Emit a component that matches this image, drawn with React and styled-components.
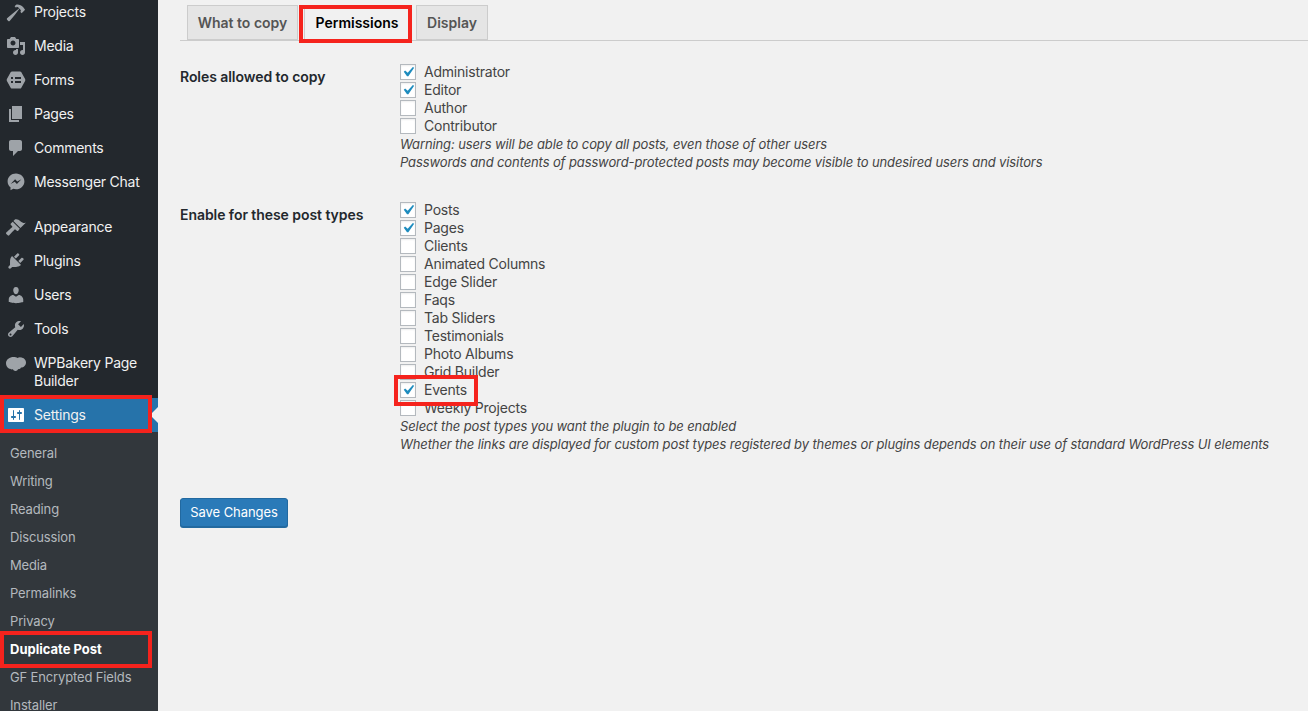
import React from "react";
import styled, { createGlobalStyle } from "styled-components";

const Global = createGlobalStyle`
  html, body { margin: 0; padding: 0; height: 100%; overflow: hidden; background: #f1f1f1; }
  body { font-family: Inter, "Liberation Sans", sans-serif; font-size: 14px; color: #444; }
`;

const Page = styled.div`
  display: flex;
  width: 1308px;
  height: 711px;
  overflow: hidden;
`;

const Sidebar = styled.nav`
  flex: 0 0 158px;
  background: #23282d;
  height: 711px;
  overflow: hidden;
`;

const Menu = styled.ul`
  list-style: none;
  margin: -5px 0 0;
  padding: 0;
`;

const MenuItem = styled.li`
  position: relative;
  display: flex;
  align-items: ${(p) => (p.$tall ? "flex-start" : "center")};
  min-height: 34px;
  padding: ${(p) => (p.$tall ? "8px 8px 8px 0" : "0 8px 0 0")};
  box-sizing: border-box;
  margin-bottom: ${(p) => (p.$sep ? "11px" : "0")};
  color: #f1f1f1;
  font-size: 14px;
  line-height: 18px;
  letter-spacing: -0.24px;
  background: ${(p) => (p.$active ? "#2673aa" : "transparent")};
  ${(p) =>
    p.$active &&
    `&::after {
      content: "";
      position: absolute;
      right: 0;
      top: 50%;
      margin-top: -8px;
      border: 8px solid transparent;
      border-right-color: #f1f1f1;
    }`}
`;

const IconSlot = styled.span`
  flex: 0 0 34px;
  display: flex;
  justify-content: center;
  align-items: center;
  color: ${(p) => (p.$active ? "#fff" : "#9ea3a8")};
  svg { display: block; margin-left: -2px; }
`;

const SubMenu = styled.ul`
  list-style: none;
  margin: 0;
  padding: 7px 0 0;
  background: #32373c;
`;

const SubItem = styled.li`
  position: relative;
  height: 28px;
  line-height: 28px;
  padding-left: 10px;
  font-size: 13px;
  letter-spacing: ${(p) => (p.$current ? "0" : "-0.14px")};
  font-weight: ${(p) => (p.$current ? 700 : 400)};
  color: ${(p) => (p.$current ? "#fff" : "#b4b9be")};
`;

const Mark = styled.span`
  position: absolute;
  box-sizing: border-box;
  border: 4px solid #f5231d;
  pointer-events: none;
  z-index: 2;
  left: ${(p) => p.$l}px;
  top: ${(p) => p.$t}px;
  right: ${(p) => p.$r}px;
  bottom: ${(p) => p.$b}px;
`;

const Main = styled.main`
  flex: 1;
  padding: 5px 0 0 22px;
  min-width: 0;
`;

const Tabs = styled.div`
  display: flex;
  gap: 6px;
  height: 35px;
  padding-left: 7px;
  border-bottom: 1px solid #ccc;
`;

const Tab = styled.a`
  position: relative;
  box-sizing: border-box;
  width: ${(p) => p.$w}px;
  height: ${(p) => (p.$active ? 36 : 35)}px;
  text-align: center;
  line-height: 34px;
  font-size: 14px;
  font-weight: 600;
  border: 1px solid #ccc;
  border-bottom: ${(p) => (p.$active ? "0" : "1px solid #ccc")};
  background: ${(p) => (p.$active ? "#f1f1f1" : "#e5e5e5")};
  color: ${(p) => (p.$active ? "#000" : "#555")};
`;

const Section = styled.section`
  display: flex;
  margin-top: ${(p) => p.$top}px;
`;

const Heading = styled.h3`
  flex: 0 0 220px;
  margin: 0;
  padding-top: 5px;
  font-size: 14px;
  line-height: 18px;
  font-weight: 600;
  letter-spacing: -0.06px;
  color: #23282d;
`;

const Options = styled.div`
  display: flex;
  flex-direction: column;
  align-items: flex-start;
`;

const Row = styled.label`
  position: relative;
  display: flex;
  align-items: center;
  gap: 8px;
  height: 18px;
  font-size: 14px;
  line-height: 18px;
  letter-spacing: -0.22px;
  color: #444;
`;

const Box = styled.span`
  flex: 0 0 16px;
  box-sizing: border-box;
  width: 16px;
  height: 16px;
  position: relative;
  border: 1px solid #b4b9be;
  background: #fff;
  box-shadow: inset 0 1px 2px rgba(0, 0, 0, 0.07);
  svg { position: absolute; left: -3px; top: -3px; color: #1e8cbe; }
`;

const Note = styled.div`
  font-size: 13px;
  line-height: 18px;
  font-style: italic;
  letter-spacing: -0.11px;
  color: #444;
`;

const SaveButton = styled.button`
  display: block;
  box-sizing: border-box;
  width: 108px;
  height: 29px;
  margin-top: 45px;
  padding: 0;
  border: 1px solid #2269a0;
  border-radius: 3px;
  background: #2a7ab8;
  box-shadow: 0 1px 0 #236a9f;
  color: #fff;
  font-family: inherit;
  font-size: 13px;
  letter-spacing: -0.08px;
  line-height: 27px;
`;

const Icon = ({ d, size = 20, rule }) => (
  <svg width={size} height={size} viewBox="0 0 20 20" fill="currentColor">
    <path d={d} fillRule={rule} />
  </svg>
);

const icons = {
  hammer:
    "M17.7 6.32l1.41 1.42-3.47 3.41-1.42-1.42.84-.82c-.32-.76-.81-1.57-1.51-2.31l-4.61 6.05-5.26 6.23c-.39.39-1.02.39-1.42 0l-1.2-1.21c-.39-.39-.39-1.02 0-1.41l6.29-5.22 5.92-4.68c-.8-.71-1.72-1.22-2.46-1.5l-.79.79-1.41-1.42 1.5-1.5c2.5-.5 5.3.6 7.1 2.4.7.7 1.1 1.2 1.6 1.9z",
  media:
    "M13 11V4c0-.55-.45-1-1-1h-1.67L9 1H5L3.67 3H2c-.55 0-1 .45-1 1v7c0 .55.45 1 1 1h10c.55 0 1-.45 1-1zM7 4.5c1.38 0 2.5 1.12 2.5 2.5S8.38 9.5 7 9.5 4.5 8.38 4.5 7 5.62 4.5 7 4.5zM14 6h5v10.5c0 1.38-1.12 2.5-2.5 2.5S14 17.88 14 16.5s1.12-2.5 2.5-2.5c.17 0 .34.02.5.05V9h-3V6zm-4 8.05V13h2v3.5c0 1.38-1.12 2.5-2.5 2.5S7 17.88 7 16.5 8.12 14 9.5 14c.17 0 .34.02.5.05z",
  forms:
    "M6 1.5h8c.5 0 .9.2 1.2.6l3.9 6.9c.3.6.3 1.4 0 2l-3.9 6.9c-.3.4-.7.6-1.2.6H6c-.5 0-.9-.2-1.2-.6L.9 11c-.3-.6-.3-1.4 0-2l3.9-6.9c.3-.4.7-.6 1.2-.6zM5 7v2h2V7H5zm4 0v2h6V7H9zm-4 4v2h2v-2H5zm4 0v2h6v-2H9z",
  page: "M6 15V2h10v13H6zm-1 1h8v2H3V5h2v11z",
  comments:
    "M5 2h9c1.1 0 2 .9 2 2v7c0 1.1-.9 2-2 2h-2l-5 5v-5H5c-1.1 0-2-.9-2-2V4c0-1.1.9-2 2-2z",
  messenger:
    "M10 1.5c-4.7 0-8.4 3.5-8.4 7.9 0 2.4 1.1 4.4 2.9 5.9v3l2.8-1.5c.8.2 1.7.4 2.7.4 4.7 0 8.4-3.5 8.4-7.8S14.7 1.5 10 1.5zm.9 10.5L8.7 9.7 4.6 12l4.5-4.8 2.2 2.3 4.1-2.3-4.5 4.8z",
  appearance:
    "M14.48 11.06L7.41 3.99l1.5-1.5c.5-.56 2.3-.47 3.51.32 1.21.8 1.43 1.28 2.91 2.1 1.18.64 2.45 1.26 4.45.85zm-.71.71L6.7 4.7 4.93 6.47c-.39.39-.39 1.02 0 1.41l1.06 1.06c.39.39.39 1.03 0 1.42-.6.6-5.66 5.17-5.66 5.17-.39.39-.39 1.03 0 1.42l1.41 1.41c.39.39 1.03.39 1.42 0 0 0 4.57-5.06 5.17-5.66.39-.39 1.03-.39 1.42 0l1.06 1.06c.39.39 1.02.39 1.41 0z",
  plugins:
    "M13.11 4.36L9.87 7.6 8 5.73l3.24-3.24c.35-.34 1.05-.2 1.56.32.52.51.66 1.21.31 1.55zm-8 1.77l.91-1.12 9.01 9.01-1.19.84c-.71.71-2.63 1.16-3.82 1.16H6.14L4.9 17.26c-.59.59-1.54.59-2.12 0-.59-.58-.59-1.53 0-2.12l1.24-1.24v-3.88c0-1.13.4-3.19 1.09-3.89zm7.26 3.97l3.24-3.24c.34-.35 1.04-.21 1.55.31.52.51.66 1.21.31 1.55l-3.24 3.25z",
  users:
    "M10 9.25c-2.27 0-2.73-3.44-2.73-3.44C7 4.02 7.82 2 9.97 2c2.16 0 2.98 2.02 2.71 3.81 0 0-.41 3.44-2.68 3.44zm0 2.57L12.72 10c2.39 0 4.52 2.33 4.52 4.53v2.49s-3.65 1.13-7.24 1.13c-3.65 0-7.24-1.13-7.24-1.13v-2.49c0-2.25 1.94-4.48 4.47-4.48z",
  tools:
    "M16.68 9.77c-1.34 1.34-3.3 1.67-4.95.99l-5.41 6.52c-.99.99-2.59.99-3.58 0s-.99-2.59 0-3.57l6.52-5.42c-.68-1.65-.35-3.61.99-4.95 1.28-1.28 3.12-1.62 4.72-1.06l-2.89 2.89 2.82 2.82 2.86-2.87c.53 1.58.18 3.39-1.08 4.67zM3.81 16.21c.4.39 1.04.39 1.43 0 .4-.4.4-1.04 0-1.43-.39-.4-1.03-.4-1.43 0-.39.39-.39 1.03 0 1.43z",
  cloud:
    "M0 9c0-3.4 3.8-6 7.5-6 1.6 0 3 .3 4 1.1 1-.7 2.2-1 3.3-.7 2.8 0 5.2 2.2 5.2 5 0 2.8-2.2 5-5 5.2-.5 1.1-1.6 1.7-2.8 1.5-.6 1.2-1.6 2-2.8 1.9-1.1 0-1.9-.6-2.5-1.7-.9.3-2 .2-2.8-.5C2 14.6 0 12.3 0 9z",
  settings:
    "M18 16V4c0-.55-.45-1-1-1H3c-.55 0-1 .45-1 1v12c0 .55.45 1 1 1h14c.55 0 1-.45 1-1zM8 11h1c.55 0 1 .45 1 1s-.45 1-1 1H8v1.5c0 .28-.22.5-.5.5s-.5-.22-.5-.5V13H6c-.55 0-1-.45-1-1s.45-1 1-1h1V5.5c0-.28.22-.5.5-.5s.5.22.5.5V11zm5-2h-1c-.55 0-1-.45-1-1s.45-1 1-1h1V5.5c0-.28.22-.5.5-.5s.5.22.5.5V7h1c.55 0 1 .45 1 1s-.45 1-1 1h-1v5.5c0 .28-.22.5-.5.5s-.5-.22-.5-.5V9z",
};

const check = "M14.83 4.89l1.34.94-5.81 8.38H9.02L5.78 9.67l1.34-1.25 2.57 2.4z";

const menu = [
  { label: "Projects", icon: "hammer" },
  { label: "Media", icon: "media" },
  { label: "Forms", icon: "forms", rule: "evenodd" },
  { label: "Pages", icon: "page" },
  { label: "Comments", icon: "comments" },
  { label: "Messenger Chat", icon: "messenger", rule: "evenodd", sep: true },
  { label: "Appearance", icon: "appearance" },
  { label: "Plugins", icon: "plugins" },
  { label: "Users", icon: "users" },
  { label: "Tools", icon: "tools" },
  { label: "WPBakery Page Builder", icon: "cloud", tall: true },
];

const subMenu = ["General", "Writing", "Reading", "Discussion", "Media", "Permalinks", "Privacy", "Duplicate Post", "GF Encrypted Fields", "Installer"];

const roles = [
  ["Administrator", true],
  ["Editor", true],
  ["Author", false],
  ["Contributor", false],
];

const postTypes = [
  ["Posts", true],
  ["Pages", true],
  ["Clients", false],
  ["Animated Columns", false],
  ["Edge Slider", false],
  ["Faqs", false],
  ["Tab Sliders", false],
  ["Testimonials", false],
  ["Photo Albums", false],
  ["Grid Builder", false],
  ["Events", true, true],
  ["Weekly Projects", false],
];

const Option = ({ label, checked, marked }) => (
  <Row>
    <Box>{checked && <Icon d={check} />}</Box>
    {label}
    {marked && <Mark $l={-6} $t={-6} $r={-11} $b={-7} />}
  </Row>
);

export default function App() {
  return (
    <Page>
      <Global />
      <Sidebar>
        <Menu>
          {menu.map((m) => (
            <MenuItem key={m.label} $sep={m.sep} $tall={m.tall}>
              <IconSlot>
                <Icon d={icons[m.icon]} rule={m.rule} />
              </IconSlot>
              <span>{m.label}</span>
            </MenuItem>
          ))}
          <MenuItem $active>
            <IconSlot $active>
              <Icon d={icons.settings} />
            </IconSlot>
            <span>Settings</span>
            <Mark $l={0} $t={-3} $r={6} $b={-1} />
          </MenuItem>
        </Menu>
        <SubMenu>
          {subMenu.map((s) => (
            <SubItem key={s} $current={s === "Duplicate Post"}>
              {s}
              {s === "Duplicate Post" && <Mark $l={0} $t={-4} $r={6} $b={-5} />}
            </SubItem>
          ))}
        </SubMenu>
      </Sidebar>
      <Main>
        <Tabs>
          <Tab $w={111}>What to copy</Tab>
          <Tab $w={106} $active>
            Permissions
            <Mark $l={-6} $t={-1} $r={-3} $b={-2} />
          </Tab>
          <Tab $w={72}>Display</Tab>
        </Tabs>
        <Section $top={22}>
          <Heading>Roles allowed to copy</Heading>
          <Options>
            {roles.map(([label, checked]) => (
              <Option key={label} label={label} checked={checked} />
            ))}
            <Note>Warning: users will be able to copy all posts, even those of other users</Note>
            <Note>Passwords and contents of password-protected posts may become visible to undesired users and visitors</Note>
          </Options>
        </Section>
        <Section $top={30}>
          <Heading>Enable for these post types</Heading>
          <Options>
            {postTypes.map(([label, checked, marked]) => (
              <Option key={label} label={label} checked={checked} marked={marked} />
            ))}
            <Note>Select the post types you want the plugin to be enabled</Note>
            <Note>Whether the links are displayed for custom post types registered by themes or plugins depends on their use of standard WordPress UI elements</Note>
          </Options>
        </Section>
        <SaveButton>Save Changes</SaveButton>
      </Main>
    </Page>
  );
}
